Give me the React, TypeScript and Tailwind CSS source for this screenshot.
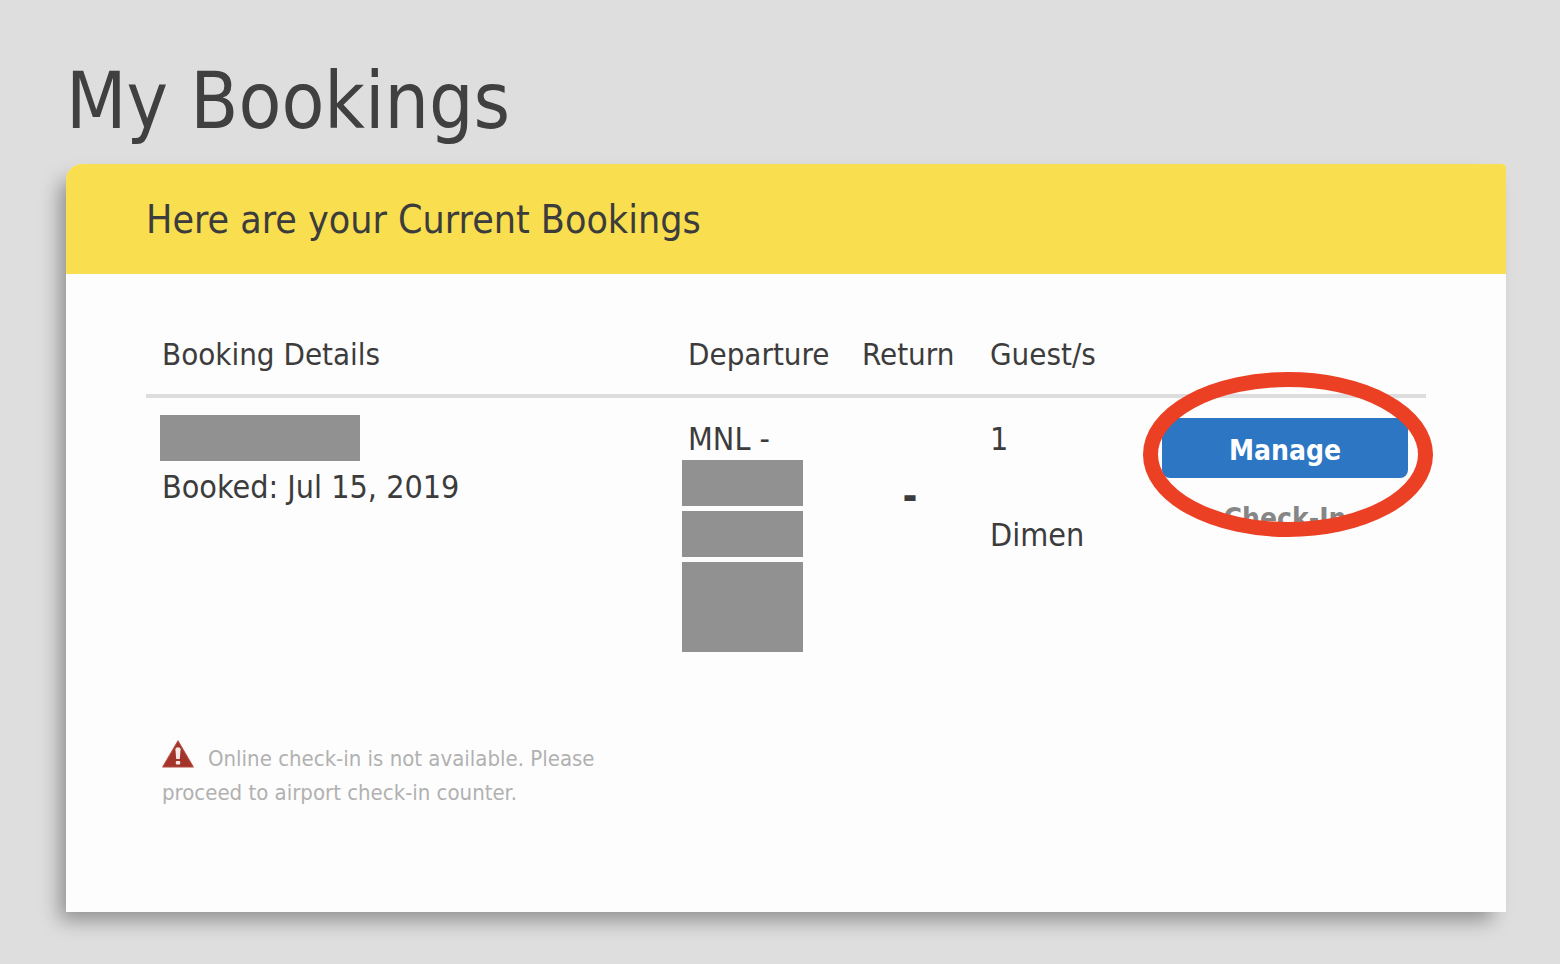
import React from "react";

function Redacted({ className }: { className: string }) {
  return <span aria-hidden="true" className={`block bg-[#919191] ${className}`} />;
}

function WarningIcon() {
  return (
    <svg viewBox="0 0 32 28" className="mr-3.5 inline-block h-7 w-8 align-[-2px]" role="img" aria-label="Warning">
      <path d="M16 1 31.2 27H.8Z" fill="#a3342b" stroke="#b5483e" strokeWidth="1.2" strokeLinejoin="round" />
      <path d="M13.4 9.2q0-2 2.6-2t2.6 2l-.8 9.8h-3.6Z" fill="#f6e9e8" />
      <rect x="13.8" y="21" width="4.4" height="3.4" rx="1" fill="#f6e9e8" />
    </svg>
  );
}

export default function App() {
  return (
    <main className="min-h-screen bg-[#dedede] pt-[53px] pr-[54px] pb-[52px] pl-[66px] font-['DejaVu_Sans_Condensed','DejaVu_Sans',sans-serif] text-[#3c3c3c]">
      <h1 className="text-[78px] leading-24 text-[#404040]">My Bookings</h1>

      <section className="mt-[15px] rounded-tl-2xl rounded-tr-sm bg-[#fdfdfd] shadow-[-10px_12px_20px_-4px_rgba(0,0,0,0.36)]">
        <h2 className="rounded-tl-2xl rounded-tr-sm bg-[#f9df50] px-20 pt-8 pb-[30px] text-[39px] leading-12">
          Here are your Current Bookings
        </h2>

        <div className="px-20 pt-10 pb-[102px]">
          <table className="w-full table-fixed border-collapse text-left text-[32px] leading-12">
            <colgroup>
              <col />
              <col className="w-[174px]" />
              <col className="w-32" />
              <col className="w-[170px]" />
              <col className="w-[282px]" />
            </colgroup>
            <thead>
              <tr className="border-b-4 border-[#dddddd] text-[31px]">
                <th scope="col" className="p-4 font-normal">Booking Details</th>
                <th scope="col" className="p-4 font-normal">Departure</th>
                <th scope="col" className="p-4 font-normal">Return</th>
                <th scope="col" className="p-4 font-normal">Guest/s</th>
                <td />
              </tr>
            </thead>
            <tbody>
              <tr className="align-top">
                <td className="px-4 pt-[17px]">
                  <Redacted className="-ml-0.5 mb-0.5 h-[46px] w-50" />
                  Booked: Jul 15, 2019
                </td>
                <td className="px-4 pt-[17px] pb-4">
                  <p>MNL -</p>
                  <div className="-mt-[3px] -ml-1.5 flex w-[121px] flex-col gap-[5px]">
                    <Redacted className="h-[46px]" />
                    <Redacted className="h-[46px]" />
                    <Redacted className="h-[90px]" />
                  </div>
                </td>
                <td className="px-4 pt-[74px] text-center text-[40px] font-bold">-</td>
                <td className="px-4 pt-[17px]">
                  <p>1</p>
                  <p className="mt-12">Dimen</p>
                </td>
                <td className="px-[18px] pt-5 text-[28px] font-bold">
                  <div className="relative flex flex-col gap-2.5">
                    <button type="button" className="h-15 w-full rounded-b-lg bg-[#2d76c3] pt-1.5 text-white">
                      Manage
                    </button>
                    <button type="button" disabled className="h-15 w-full pt-0.5 text-[#868686]">
                      Check-In
                    </button>
                    <svg
                      viewBox="0 0 290 166"
                      className="pointer-events-none absolute -top-[46px] -left-[19px] h-[166px] w-[290px]"
                      aria-hidden="true"
                    >
                      <ellipse cx="145" cy="82.5" rx="137.5" ry="75" fill="none" stroke="#ec4025" strokeWidth="15" />
                    </svg>
                  </div>
                </td>
              </tr>
              <tr>
                <td className="px-4 pt-[72px] text-[22px] leading-[34px] text-[#b1b1b1]">
                  <WarningIcon />
                  Online check-in is not available. Please
                  <br />
                  proceed to airport check-in counter.
                </td>
                <td colSpan={4} />
              </tr>
            </tbody>
          </table>
        </div>
      </section>
    </main>
  );
}
